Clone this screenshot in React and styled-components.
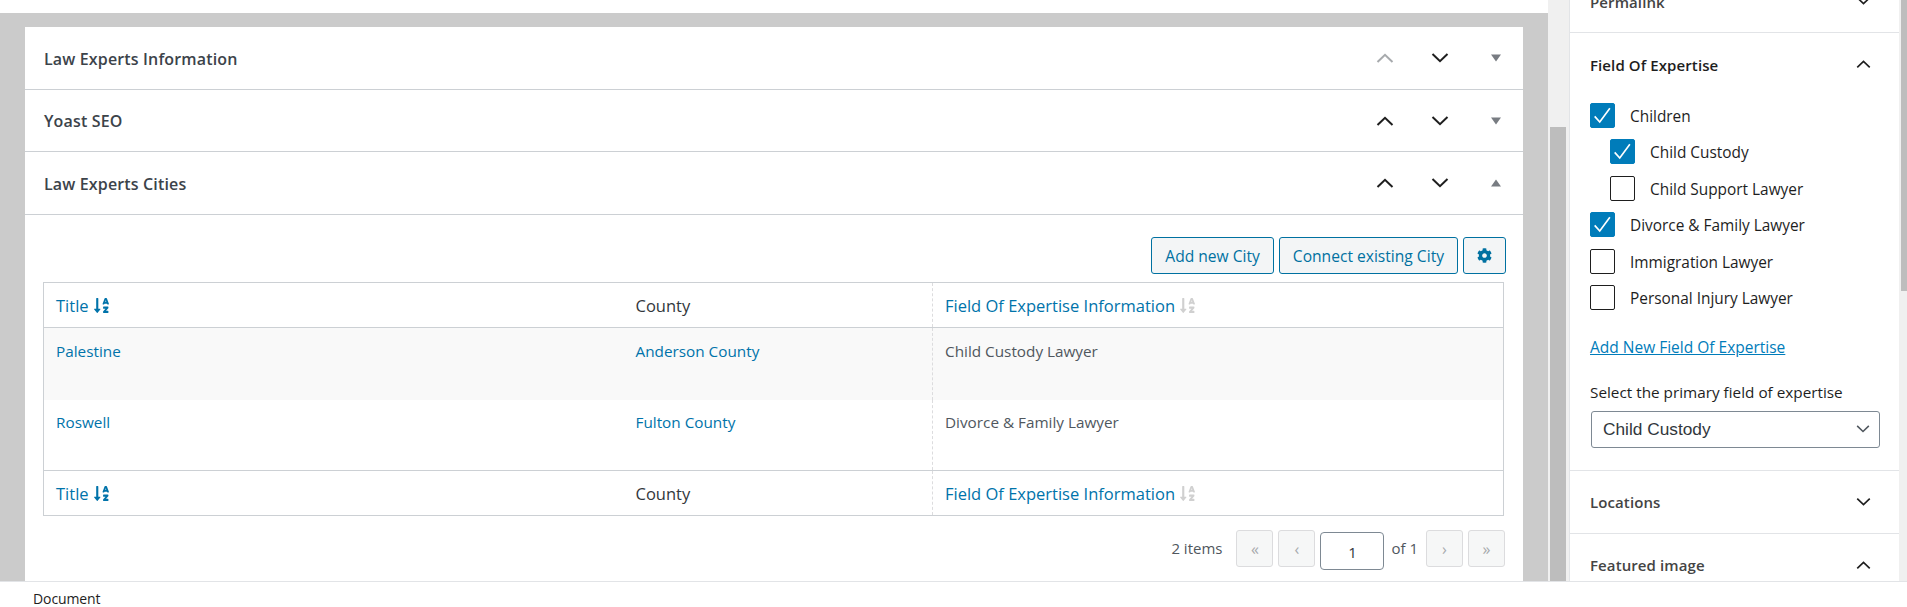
import React from "react";
import styled, { createGlobalStyle } from "styled-components";
import { FaCog, FaSortAlphaDown } from "react-icons/fa";

const GlobalStyle = createGlobalStyle`
  html, body {
    margin: 0;
    padding: 0;
    background: #fff;
  }
  body {
    font-family: "Open Sans", "Liberation Sans", sans-serif;
    color: #3c434a;
  }
`;

const Chevron = ({ up, color = "#1e1e1e" }) => (
  <svg width="18" height="10" viewBox="0 0 18 10" fill="none">
    <path
      d={up ? "M1.5 9L9 1.8L16.5 9" : "M1.5 1L9 8.2L16.5 1"}
      stroke={color}
      strokeWidth="2"
    />
  </svg>
);

const Triangle = ({ up }) => (
  <svg width="10" height="8" viewBox="0 0 10 8">
    <path d={up ? "M0 7.5L5 0.5L10 7.5Z" : "M0 0.5L10 0.5L5 7.5Z"} fill="#787c82" />
  </svg>
);

const Tick = () => (
  <svg width="25" height="25" viewBox="0 0 25 25" fill="none">
    <path d="M4 13.5L9.5 19.5L20.5 4.5" stroke="#fff" strokeWidth="1.8" />
  </svg>
);

const boxes = [
  { label: "Law Experts Information", upOff: true },
  { label: "Yoast SEO" },
  { label: "Law Experts Cities", open: true },
];

const terms = [
  { label: "Children", checked: true },
  { label: "Child Custody", checked: true, child: true },
  { label: "Child Support Lawyer", child: true },
  { label: "Divorce & Family Lawyer", checked: true },
  { label: "Immigration Lawyer" },
  { label: "Personal Injury Lawyer" },
];

const rows = [
  { title: "Palestine", county: "Anderson County", field: "Child Custody Lawyer", alt: true },
  { title: "Roswell", county: "Fulton County", field: "Divorce & Family Lawyer" },
];

const HeadRow = ({ foot }) => (
  <HeadTr $foot={foot}>
    <HeadCell>
      <SortLink>
        Title <FaSortAlphaDown />
      </SortLink>
    </HeadCell>
    <HeadCell>County</HeadCell>
    <HeadCell $dashed>
      <SortLink>
        Field Of Expertise Information <MutedSort><FaSortAlphaDown /></MutedSort>
      </SortLink>
    </HeadCell>
  </HeadTr>
);

const App = () => {
  return (
    <Page>
      <GlobalStyle />
      <Workspace>
        <MainColumn>
          <Canvas>
            <MetaPanel>
              {boxes.map((b) => (
                <BoxHeader key={b.label}>
                  <BoxTitle>{b.label}</BoxTitle>
                  <BoxControls>
                    <ControlSlot>
                      <Chevron up color={b.upOff ? "#a7aaad" : "#1e1e1e"} />
                    </ControlSlot>
                    <ControlSlot>
                      <Chevron />
                    </ControlSlot>
                    <ToggleSlot>
                      <Triangle up={b.open} />
                    </ToggleSlot>
                  </BoxControls>
                </BoxHeader>
              ))}
              <BoxBody>
                <Toolbar>
                  <ActionButton>Add new City</ActionButton>
                  <ActionButton>Connect existing City</ActionButton>
                  <GearButton>
                    <FaCog />
                  </GearButton>
                </Toolbar>
                <CityTable>
                  <colgroup>
                    <col width="580" />
                    <col width="309" />
                    <col />
                  </colgroup>
                  <thead>
                    <HeadRow />
                  </thead>
                  <tbody>
                    {rows.map((r) => (
                      <BodyRow key={r.title} $alt={r.alt}>
                        <BodyCell>
                          <CellLink>{r.title}</CellLink>
                        </BodyCell>
                        <BodyCell>
                          <CellLink>{r.county}</CellLink>
                        </BodyCell>
                        <BodyCell $dashed>{r.field}</BodyCell>
                      </BodyRow>
                    ))}
                  </tbody>
                  <tfoot>
                    <HeadRow foot />
                  </tfoot>
                </CityTable>
                <Pagination>
                  <PageText $right={14}>2 items</PageText>
                  <PageButton>«</PageButton>
                  <PageButton>‹</PageButton>
                  <PageInput>1</PageInput>
                  <PageText $left={7} $right={8}>of 1</PageText>
                  <PageButton>›</PageButton>
                  <PageButton>»</PageButton>
                </Pagination>
              </BoxBody>
            </MetaPanel>
          </Canvas>
        </MainColumn>
        <EditorScroll>
          <EditorThumb />
        </EditorScroll>
        <Sidebar>
          <SideSection $clipped>
            <SideHeader>
              <SideTitle>Permalink</SideTitle>
              <Chevron />
            </SideHeader>
          </SideSection>
          <SideSection>
            <SideHeader>
              <SideTitle $dark>Field Of Expertise</SideTitle>
              <Chevron up />
            </SideHeader>
            <TermList>
              {terms.map((t) => (
                <TermRow key={t.label} $child={t.child}>
                  <CheckBox $checked={t.checked}>{t.checked && <Tick />}</CheckBox>
                  <TermText>{t.label}</TermText>
                </TermRow>
              ))}
            </TermList>
            <AddLink>Add New Field Of Expertise</AddLink>
            <SelectLabel>Select the primary field of expertise</SelectLabel>
            <SelectBox>
              Child Custody
              <Chevron color="#50575e" />
            </SelectBox>
          </SideSection>
          <SideSection>
            <SideHeader>
              <SideTitle>Locations</SideTitle>
              <Chevron />
            </SideHeader>
          </SideSection>
          <SideSection>
            <SideHeader>
              <SideTitle>Featured image</SideTitle>
              <Chevron up />
            </SideHeader>
          </SideSection>
        </Sidebar>
        <SideScroll>
          <SideThumb />
        </SideScroll>
      </Workspace>
      <Footer>Document</Footer>
    </Page>
  );
};

const Page = styled.div`
  width: 1907px;
  height: 607px;
  display: flex;
  flex-direction: column;
  overflow: hidden;
`;
const Workspace = styled.div`
  flex: 0 0 581px;
  display: flex;
  min-height: 0;
`;
const MainColumn = styled.div`
  width: 1548px;
  padding-top: 13px;
  box-sizing: border-box;
  display: flex;
`;
const Canvas = styled.div`
  flex: 1;
  background: #cbcbcb;
  padding: 14px 25px 0;
  display: flex;
  min-width: 0;
`;
const MetaPanel = styled.div`
  flex: 1;
  background: #fff;
  min-width: 0;
`;
const BoxHeader = styled.div`
  display: flex;
  align-items: center;
  justify-content: space-between;
  height: 62px;
  border-bottom: 1px solid #ccd0d4;
  padding: 0 19px;
  &:nth-child(2) {
    height: 61px;
  }
`;
const BoxTitle = styled.h2`
  margin: 0;
  padding-top: 1px;
  font-size: 16px;
  font-weight: 600;
  color: #3c434a;
  letter-spacing: 0.15px;
`;
const BoxControls = styled.div`
  display: flex;
  align-items: center;
`;
const ControlSlot = styled.span`
  width: 55px;
  display: flex;
  justify-content: center;
`;
const ToggleSlot = styled.span`
  width: 54px;
  display: flex;
  justify-content: center;
  margin: 0 -19px 0 2px;
`;
const BoxBody = styled.div`
  padding: 22px 18px 0;
`;
const Toolbar = styled.div`
  display: flex;
  justify-content: flex-end;
  gap: 5px;
  margin-right: -1px;
  margin-bottom: 8px;
`;
const ActionButton = styled.button`
  height: 37px;
  padding: 0 13px;
  background: #f3f5f6;
  border: 1px solid #0071a1;
  border-radius: 3px;
  color: #0071a1;
  font-family: inherit;
  font-size: 15.6px;
`;
const GearButton = styled(ActionButton)`
  width: 43px;
  padding: 0;
  display: flex;
  align-items: center;
  justify-content: center;
  svg {
    font-size: 15px;
  }
`;
const CityTable = styled.table`
  width: 1461px;
  height: 233px;
  table-layout: fixed;
  border-collapse: collapse;
  border: 1px solid #ccd0d4;
`;
const HeadTr = styled.tr`
  height: 45px;
  border-bottom: ${(p) => (p.$foot ? "none" : "1px solid #ccd0d4")};
  border-top: ${(p) => (p.$foot ? "1px solid #ccd0d4" : "none")};
`;
const HeadCell = styled.th`
  padding: 0 12px;
  text-align: left;
  font-weight: 400;
  font-size: 16.5px;
  color: #32373c;
  border-left: ${(p) => (p.$dashed ? "1px dashed #dcdcde" : "none")};
`;
const SortLink = styled.span`
  color: #0073aa;
  svg {
    font-size: 17px;
    vertical-align: -2px;
    color: #0073aa;
  }
`;
const MutedSort = styled.span`
  svg {
    color: #d0d0d0;
  }
`;
const BodyRow = styled.tr`
  height: ${(p) => (p.$alt ? "72px" : "71px")};
  background: ${(p) => (p.$alt ? "#f9f9f9" : "#fff")};
  td {
    padding-top: ${(p) => (p.$alt ? "13px" : "12px")};
  }
`;
const BodyCell = styled.td`
  padding: 0 12px;
  vertical-align: top;
  font-size: 15.3px;
  line-height: 20px;
  color: #50575e;
  border-left: ${(p) => (p.$dashed ? "1px dashed #dcdcde" : "none")};
`;
const CellLink = styled.a`
  color: #0073aa;
`;
const Pagination = styled.div`
  display: flex;
  align-items: flex-start;
  justify-content: flex-end;
  gap: 5px;
  margin-top: 14px;
`;
const PageText = styled.span`
  font-size: 15px;
  line-height: 37px;
  color: #50575e;
  margin: 0 ${(p) => (p.$right || 0) - 5}px 0 ${(p) => (p.$left ? p.$left - 5 : 0)}px;
`;
const PageButton = styled.span`
  width: 37px;
  height: 37px;
  box-sizing: border-box;
  display: flex;
  align-items: center;
  justify-content: center;
  background: #f6f7f7;
  border: 1px solid #dcdcde;
  border-radius: 3px;
  color: #a7aaad;
  font-size: 16px;
`;
const PageInput = styled.span`
  width: 64px;
  height: 38px;
  box-sizing: border-box;
  margin-top: 2px;
  padding-top: 9px;
  text-align: center;
  border: 1px solid #7e8993;
  border-radius: 4px;
  font-size: 15px;
  color: #32373c;
`;
const EditorScroll = styled.div`
  width: 21px;
  background: #f0f0f0;
  padding: 127px 3px 0 2px;
  box-sizing: border-box;
`;
const EditorThumb = styled.div`
  height: 100%;
  background: #bdbdbd;
`;
const Sidebar = styled.aside`
  width: 330px;
  box-sizing: border-box;
  border-left: 1px solid #e2e4e7;
  background: #fff;
  overflow: hidden;
`;
const SideSection = styled.section`
  border-bottom: 1px solid #e2e4e7;
  margin-top: ${(p) => (p.$clipped ? "-30px" : "0")};
  &:last-child {
    border-bottom: none;
  }
`;
const SideHeader = styled.div`
  display: flex;
  align-items: center;
  justify-content: space-between;
  height: 62px;
  padding: 0 28px 0 20px;
  svg {
    width: 15px;
  }
`;
const SideTitle = styled.h3`
  margin: 0;
  padding-top: 1px;
  font-size: 15px;
  font-weight: 600;
  letter-spacing: 0.1px;
  color: ${(p) => (p.$dark ? "#1e1e1e" : "#444")};
`;
const TermList = styled.div`
  padding: 8px 20px 0;
`;
const TermRow = styled.label`
  display: flex;
  align-items: center;
  gap: 15px;
  height: 25px;
  margin-bottom: 11.4px;
  margin-left: ${(p) => (p.$child ? "20px" : "0")};
  font-size: 15.4px;
  color: #1e1e1e;
`;
const TermText = styled.span`
  padding-top: 2px;
`;
const CheckBox = styled.span`
  width: 25px;
  height: 25px;
  box-sizing: border-box;
  flex: none;
  border-radius: 2px;
  background: ${(p) => (p.$checked ? "#007cba" : "#fff")};
  border: 1px solid ${(p) => (p.$checked ? "#007cba" : "#1e1e1e")};
  display: flex;
  align-items: center;
  justify-content: center;
`;
const AddLink = styled.a`
  display: block;
  margin: 25px 20px 0;
  font-size: 15.5px;
  line-height: 24px;
  color: #007cba;
  text-decoration: underline;
`;
const SelectLabel = styled.div`
  margin: 21px 20px 0;
  font-size: 15.3px;
  line-height: 24px;
  color: #1e1e1e;
`;
const SelectBox = styled.div`
  margin: 7px 19px 22px 21px;
  height: 37px;
  box-sizing: border-box;
  border: 1px solid #7e8993;
  border-radius: 3px;
  padding: 0 9px 0 11px;
  display: flex;
  align-items: center;
  justify-content: space-between;
  font-family: "Liberation Sans", sans-serif;
  font-size: 17.3px;
  color: #32373c;
  svg {
    width: 14px;
  }
`;
const SideScroll = styled.div`
  width: 8px;
  background: #f0f0f0;
  padding-left: 2px;
  box-sizing: border-box;
`;
const SideThumb = styled.div`
  height: 291px;
  background: #bdbdbd;
`;
const Footer = styled.footer`
  flex: 1;
  border-top: 1px solid #e2e4e7;
  padding: 9px 0 0 33px;
  font-size: 14px;
  line-height: 16px;
  letter-spacing: -0.1px;
  color: #1e1e1e;
  background: #fff;
`;

export default App;
